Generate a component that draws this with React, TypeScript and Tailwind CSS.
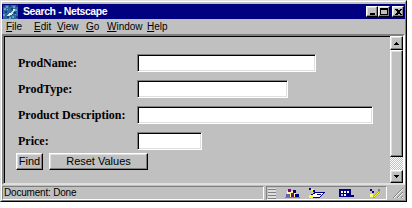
const raised =
  "border border-t-white border-l-white border-r-black border-b-black shadow-[inset_-1px_-1px_0_#808080,inset_1px_1px_0_#dfdfdf]";
const sunken =
  "border border-t-[#808080] border-l-[#808080] border-r-white border-b-white shadow-[inset_1px_1px_0_#000,inset_-1px_-1px_0_#dfdfdf]";
const thin = "border border-t-[#808080] border-l-[#808080] border-r-white border-b-white";

const menus = [
  { key: "F", rest: "ile", w: "w-[28px]" },
  { key: "E", rest: "dit", w: "w-[23px]" },
  { key: "V", rest: "iew", w: "w-[29px]" },
  { key: "G", rest: "o", w: "w-[21px]" },
  { key: "W", rest: "indow", w: "w-[40px]" },
  { key: "H", rest: "elp", w: "w-[30px]" },
];

const fields = [
  { label: "ProdName:", w: "w-[179px]" },
  { label: "ProdType:", w: "w-[151px]" },
  { label: "Product Description:", w: "w-[236px]" },
  { label: "Price:", w: "w-[65px]" },
];

// speckled blue square, like the old Netscape "N" window icon
const speckles = [
  [0, 0, "#1a3d6e"], [3, 1, "#5fa0c8"], [6, 0, "#1a3d6e"], [10, 1, "#5fa0c8"], [13, 0, "#1a3d6e"],
  [1, 3, "#5fa0c8"], [8, 3, "#1a3d6e"], [12, 4, "#5fa0c8"], [2, 6, "#1a3d6e"], [11, 7, "#1a3d6e"],
  [0, 9, "#5fa0c8"], [4, 11, "#1a3d6e"], [9, 11, "#5fa0c8"], [13, 11, "#1a3d6e"], [6, 12, "#5fa0c8"],
] as const;

function NetscapeIcon() {
  return (
    <svg width="15" height="14" viewBox="0 0 15 14" shapeRendering="crispEdges">
      <rect width="15" height="14" fill="#2b6a9a" />
      {speckles.map(([x, y, c], i) => (
        <rect key={i} x={x} y={y} width="2" height="2" fill={c} />
      ))}
      <path d="M3 11 L5 9 L7 9 L9 6 L11 4 L12 5 L10 8 L8 10 L6 11 Z" fill="#bfe6f0" />
      <rect x="6" y="8" width="2" height="2" fill="#ffffff" />
      <rect x="10" y="4" width="1" height="1" fill="#ffffff" />
      <rect x="4" y="4" width="1" height="1" fill="#00e0e0" />
      <rect x="12" y="9" width="1" height="1" fill="#00e0e0" />
    </svg>
  );
}

function CaptionButton({ children }: { children: React.ReactNode }) {
  return (
    <div className={`${raised} flex h-[11px] w-[12px] items-center justify-center bg-[#c0c0c0]`}>
      {children}
    </div>
  );
}

function Triangle({ up }: { up?: boolean }) {
  return (
    <svg width="5" height="3" viewBox="0 0 5 3" shapeRendering="crispEdges">
      {up ? (
        <>
          <rect x="2" y="0" width="1" height="1" fill="#000" />
          <rect x="1" y="1" width="3" height="1" fill="#000" />
          <rect x="0" y="2" width="5" height="1" fill="#000" />
        </>
      ) : (
        <>
          <rect x="0" y="0" width="5" height="1" fill="#000" />
          <rect x="1" y="1" width="3" height="1" fill="#000" />
          <rect x="2" y="2" width="1" height="1" fill="#000" />
        </>
      )}
    </svg>
  );
}

export default function App() {
  return (
    <div className="h-[208px] w-[412px] overflow-hidden bg-white font-['Liberation_Sans',Arial,sans-serif] text-black">
      <div className="h-[202px] w-[407px] border border-t-[#dfdfdf] border-l-[#dfdfdf] border-r-black border-b-black bg-[#c0c0c0]">
        <div className="flex h-full flex-col border border-t-white border-l-white border-r-[#808080] border-b-[#808080] pt-[2px]">
          {/* Title bar */}
          <div className="flex h-[15px] items-center bg-[#000080] pl-[1px] pr-[1px]">
            <NetscapeIcon />
            <span className="ml-[5px] text-[10.5px] font-bold leading-none tracking-[-0.4px] text-white">
              Search - Netscape
            </span>
            <div className="ml-auto flex items-center">
              <CaptionButton>
                <div className="mt-[4px] h-[2px] w-[5px] bg-black" />
              </CaptionButton>
              <CaptionButton>
                <div className="h-[7px] w-[8px] border border-t-2 border-black" />
              </CaptionButton>
              <div className="ml-[2px]">
                <CaptionButton>
                  <svg width="7" height="6" viewBox="0 0 7 6" shapeRendering="crispEdges">
                    <path d="M0 0h2l1.5 1.5L5 0h2L4.5 3 7 6H5L3.5 4.5 2 6H0l2.5-3z" fill="#000" />
                  </svg>
                </CaptionButton>
              </div>
            </div>
          </div>

          {/* Menu bar */}
          <div className="flex h-[15px] items-center pl-[4px] text-[10px] leading-none">
            {menus.map((m) => (
              <span key={m.key} className={m.w}>
                <span className="underline underline-offset-[1px]">{m.key}</span>
                {m.rest}
              </span>
            ))}
          </div>

          {/* Content */}
          <div className="flex h-[151px] border-2 border-t-[#808080] border-l-[#808080] border-r-white border-b-[#dfdfdf] shadow-[inset_1px_1px_0_#000]">
            <div className="flex flex-1 flex-col pl-[12px] pt-[18px]">
              <div className="flex flex-col gap-[8px] pl-[2px]">
                {fields.map((f) => (
                  <div key={f.label} className="flex h-[18px] items-center">
                    <span className="w-[119px] font-['Liberation_Serif','Times_New_Roman',serif] text-[12px] font-bold">
                      {f.label}
                    </span>
                    <input type="text" className={`${sunken} ${f.w} h-[18px] bg-white outline-none`} />
                  </div>
                ))}
              </div>
              <div className="mt-[3px] flex gap-[6px] text-[11px]">
                <button type="button" className={`${raised} h-[17px] w-[27px] bg-[#c0c0c0] leading-none`}>
                  Find
                </button>
                <button type="button" className={`${raised} h-[17px] w-[99px] bg-[#c0c0c0] leading-none`}>
                  Reset Values
                </button>
              </div>
            </div>

            {/* Scrollbar */}
            <div className="flex w-[13px] flex-col">
              <div className={`${raised} flex h-[14px] items-center justify-center bg-[#c0c0c0]`}>
                <Triangle up />
              </div>
              <div className={`${raised} h-[107px] bg-[#c0c0c0]`} />
              <div className="flex-1 bg-[conic-gradient(#fff_25%,#c0c0c0_0_50%,#fff_0_75%,#c0c0c0_0)] bg-[length:2px_2px]" />
              <div className={`${raised} flex h-[13px] items-center justify-center bg-[#c0c0c0]`}>
                <Triangle />
              </div>
            </div>
          </div>

          {/* Status bar */}
          <div className="flex h-[15px] items-stretch pt-[1px]">
            <div className={`${thin} flex w-[262px] items-center pl-[1px] text-[10px] leading-none tracking-[-0.2px]`}>
              Document: Done
            </div>
            <div className={`${thin} ml-[2px] flex w-[121px] items-center`}>
              <svg width="8" height="11" viewBox="0 0 8 11" className="ml-[1px]" shapeRendering="crispEdges">
                <rect x="0" y="0" width="8" height="11" fill="#dfdfdf" />
                <rect x="0" y="1" width="8" height="1" fill="#808080" />
                <rect x="0" y="4" width="8" height="1" fill="#808080" />
                <rect x="0" y="7" width="8" height="1" fill="#808080" />
                <rect x="0" y="10" width="8" height="1" fill="#808080" />
              </svg>
              <svg width="15" height="11" viewBox="0 0 15 11" className="ml-[9px]" shapeRendering="crispEdges">
                <rect x="2" y="3" width="9" height="6" fill="#ffff80" />
                <rect x="3" y="1" width="3" height="3" fill="#800080" />
                <rect x="8" y="2" width="3" height="3" fill="#000080" />
                <rect x="1" y="6" width="4" height="3" fill="#6060c0" />
                <rect x="6" y="5" width="3" height="4" fill="#800080" />
                <rect x="10" y="6" width="4" height="4" fill="#000080" />
                <rect x="0" y="9" width="15" height="1" fill="#808080" />
              </svg>
              <svg width="18" height="11" viewBox="0 0 18 11" className="ml-[8px]" shapeRendering="crispEdges">
                <rect x="1" y="0" width="2" height="2" fill="#000080" />
                <rect x="3" y="1" width="3" height="2" fill="#ffff00" />
                <rect x="5" y="2" width="2" height="2" fill="#000080" />
                <path d="M2 8 L8 4 H17 L12 9 H3 Z" fill="#ffffff" stroke="#000080" strokeWidth="1" />
                <rect x="1" y="7" width="4" height="3" fill="#ffff00" />
                <rect x="9" y="6" width="4" height="1" fill="#000080" />
              </svg>
              <svg width="15" height="11" viewBox="0 0 15 11" className="ml-[13px]" shapeRendering="crispEdges">
                <rect x="0" y="1" width="12" height="8" fill="#000080" />
                <rect x="2" y="3" width="2" height="2" fill="#ffffff" />
                <rect x="5" y="3" width="2" height="2" fill="#ffffff" />
                <rect x="8" y="3" width="2" height="2" fill="#ffffff" />
                <rect x="2" y="6" width="2" height="2" fill="#c0c0ff" />
                <rect x="5" y="6" width="2" height="2" fill="#ffffff" />
                <rect x="12" y="7" width="3" height="2" fill="#000080" />
              </svg>
              <svg width="12" height="11" viewBox="0 0 12 11" className="ml-[15px]" shapeRendering="crispEdges">
                <rect x="1" y="1" width="2" height="2" fill="#000080" />
                <rect x="3" y="3" width="2" height="2" fill="#000080" />
                <path d="M4 9 L10 3 L11 4 L5 10 Z" fill="#ffff00" stroke="#808000" strokeWidth="0.5" />
                <rect x="1" y="6" width="3" height="3" fill="#ffff80" />
                <rect x="9" y="1" width="2" height="2" fill="#808080" />
              </svg>
            </div>
            <div className="flex flex-1 items-end justify-end pb-[1px] pr-[1px]">
              <svg width="12" height="12" viewBox="0 0 12 12" shapeRendering="crispEdges">
                <path d="M11 1 L1 11 M11 5 L5 11 M11 9 L9 11" stroke="#808080" strokeWidth="1.2" />
                <path d="M11 2 L2 11 M11 6 L6 11 M11 10 L10 11" stroke="#ffffff" strokeWidth="0.8" />
              </svg>
            </div>
          </div>
        </div>
      </div>
    </div>
  );
}
